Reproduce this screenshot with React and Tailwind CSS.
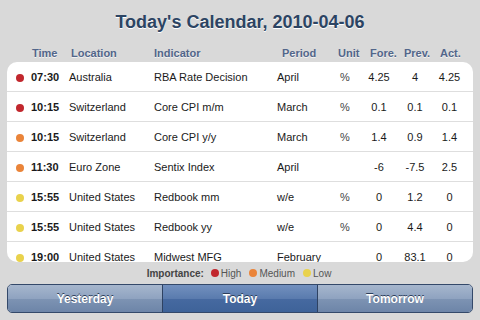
const rows = [
  { imp: "high", time: "07:30", loc: "Australia", ind: "RBA Rate Decision", period: "April", unit: "%", fore: "4.25", prev: "4", act: "4.25" },
  { imp: "high", time: "10:15", loc: "Switzerland", ind: "Core CPI m/m", period: "March", unit: "%", fore: "0.1", prev: "0.1", act: "0.1" },
  { imp: "medium", time: "10:15", loc: "Switzerland", ind: "Core CPI y/y", period: "March", unit: "%", fore: "1.4", prev: "0.9", act: "1.4" },
  { imp: "medium", time: "11:30", loc: "Euro Zone", ind: "Sentix Index", period: "April", unit: "", fore: "-6", prev: "-7.5", act: "2.5" },
  { imp: "low", time: "15:55", loc: "United States", ind: "Redbook mm", period: "w/e", unit: "%", fore: "0", prev: "1.2", act: "0" },
  { imp: "low", time: "15:55", loc: "United States", ind: "Redbook yy", period: "w/e", unit: "%", fore: "0", prev: "4.4", act: "0" },
  { imp: "low", time: "19:00", loc: "United States", ind: "Midwest MFG", period: "February", unit: "", fore: "0", prev: "83.1", act: "0" },
];

const dotColor = {
  high: "bg-[#c1272d]",
  medium: "bg-[#ea8439]",
  low: "bg-[#e9d24c]",
};

function Dot({ imp }) {
  return <span className={`block w-2 h-2 rounded-full ${dotColor[imp]}`} />;
}

export default function App() {
  const tabs = ["Yesterday", "Today", "Tomorrow"];
  const active = 1;

  return (
    <div className="w-[480px] h-[320px] overflow-hidden bg-[#d9d9d9] font-['Liberation_Sans',Arial,sans-serif]">
      {/* title */}
      <div className="pt-[10px] h-[44px] text-center text-[18px] leading-[24px] font-bold text-[#2c4463] [text-shadow:0_1px_0_#ffffff]">
        Today's Calendar, 2010-04-06
      </div>

      {/* column headers */}
      <div className="flex h-[18px] items-center pl-[32px] text-[11px] font-bold text-[#52668a] [text-shadow:0_1px_0_#f2f2f2]">
        <span className="w-[39px]">Time</span>
        <span className="w-[83px]">Location</span>
        <span className="w-[128px]">Indicator</span>
        <span className="w-[56px]">Period</span>
        <span className="w-[32px]">Unit</span>
        <span className="w-[34px]">Fore.</span>
        <span className="w-[36px]">Prev.</span>
        <span>Act.</span>
      </div>

      {/* table card */}
      <div className="mx-[7px] h-[200px] overflow-hidden rounded-[10px] bg-white">
        {rows.map((r, i) => (
          <div
            key={i}
            className="flex h-[30px] items-center border-b border-[#dedede] pl-[9px] pt-[2px] text-[11px] text-[#1a1a1a]"
          >
            <Dot imp={r.imp} />
            <span className="ml-[7px] w-[38px] font-bold">{r.time}</span>
            <span className="w-[85px] whitespace-nowrap">{r.loc}</span>
            <span className="w-[123px] whitespace-nowrap">{r.ind}</span>
            <span className="w-[58px] whitespace-nowrap">{r.period}</span>
            <span className="w-[20px] text-center text-[#444]">{r.unit}</span>
            <span className="w-[48px] text-center">{r.fore}</span>
            <span className="w-[24px] text-center">{r.prev}</span>
            <span className="w-[45px] text-center">{r.act}</span>
          </div>
        ))}
      </div>

      {/* legend */}
      <div className="flex h-[22px] items-center justify-center pr-[2px] text-[10px] text-[#555]">
        <span className="mr-[7px] font-bold text-[#444]">Importance:</span>
        <span className="mr-[2px] block w-[8px] h-[8px] rounded-full bg-[#c1272d]" />
        <span className="mr-[8px]">High</span>
        <span className="mr-[2px] block w-[8px] h-[8px] rounded-full bg-[#ea8439]" />
        <span className="mr-[8px]">Medium</span>
        <span className="mr-[2px] block w-[8px] h-[8px] rounded-full bg-[#e9d24c]" />
        <span>Low</span>
      </div>

      {/* segmented control */}
      <div className="mx-[7px] flex h-[29px] overflow-hidden rounded-[5px] border border-[#34496a]">
        {tabs.map((t, i) => (
          <div
            key={t}
            className={
              "flex flex-1 items-center justify-center text-[12px] font-bold text-white [text-shadow:0_-1px_0_#2c3e5a] " +
              (i > 0 ? "border-l border-[#2e4262] " : "") +
              (i === active
                ? "bg-[linear-gradient(#7290be_0%,#5a7bae_50%,#4669a0_52%,#3e6399_100%)]"
                : "bg-[linear-gradient(#a6b6cd_0%,#8fa3c0_50%,#7d93b3_52%,#6d85a8_100%)]")
            }
          >
            {t}
          </div>
        ))}
      </div>
    </div>
  );
}
